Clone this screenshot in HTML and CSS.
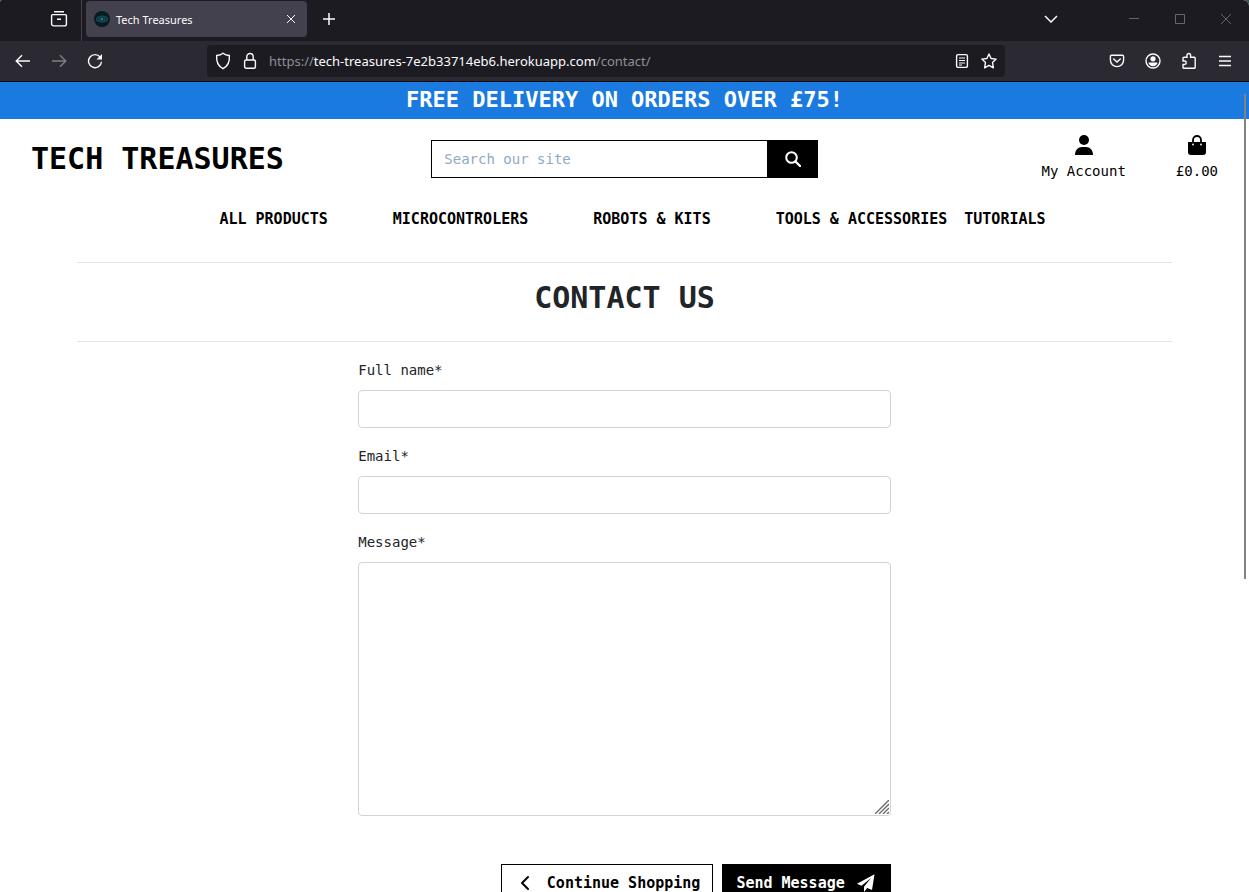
FILE: index.html
```html
<!DOCTYPE html>
<html lang="en">
<head>
<meta charset="utf-8">
<title>Tech Treasures</title>
<link rel="stylesheet" href="styles.css">
</head>
<body>
<div class="window">
  <div class="tabbar">
    <button class="view-btn" aria-label="Recent browsing"><svg width="18" height="18" viewBox="0 0 18 18"><path d="M4 1.700h10M2.600 4.600h12.800a1 1 0 0 1 1 1v8.300a2 2 0 0 1-2 2H3.600a2 2 0 0 1-2-2V5.600a1 1 0 0 1 1-1zM7 9.200h4"/></svg></button>
    <div class="tab">
      <svg class="favicon" width="16" height="16" viewBox="0 0 16 16"><circle cx="8" cy="8" r="8" fill="#071b22"/><ellipse cx="8" cy="8" rx="5.500" ry="2.800" fill="#0d3844" stroke="#124650"/><circle cx="8" cy="8" r="2.500" fill="#0b2d39" stroke="#124650"/><circle cx="8" cy="8" r="1" fill="#5b8a95"/></svg>
      <span class="tab-title">Tech Treasures</span>
      <button class="tab-close" aria-label="Close tab"><svg width="10" height="10" viewBox="0 0 10 10"><path d="M1 1l8 8M9 1L1 9"/></svg></button>
    </div>
    <button class="new-tab" aria-label="New tab"><svg width="12" height="12" viewBox="0 0 12 12"><path d="M6 0v12M0 6h12" stroke-width="1.500"/></svg></button>
    <button class="tab-list" aria-label="List all tabs"><svg width="14" height="8" viewBox="0 0 14 8"><path d="M1 1l6 6 6-6" stroke-width="1.500"/></svg></button>
    <div class="controls">
      <button aria-label="Minimize"><svg width="10" height="10" viewBox="0 0 10 10"><path d="M0 4.500h10"/></svg></button>
      <button aria-label="Maximize"><svg width="10" height="10" viewBox="0 0 10 10"><path d="M.5.5h9v9h-9z"/></svg></button>
      <button aria-label="Close"><svg width="10" height="10" viewBox="0 0 10 10"><path d="M0 0l10 10M10 0L0 10"/></svg></button>
    </div>
  </div>
  <div class="toolbar">
    <button aria-label="Back"><svg width="16" height="14" viewBox="0 0 16 14"><path d="M15 7H1.500M7 1.200L1.200 7 7 12.800"/></svg></button>
    <button class="dim" aria-label="Forward"><svg width="16" height="14" viewBox="0 0 16 14"><path d="M1 7h13.500M9 1.200L14.800 7 9 12.800"/></svg></button>
    <button aria-label="Reload"><svg width="16" height="16" viewBox="0 0 16 16"><path d="M13.200 4.200A6.500 6.500 0 1 0 14.500 8.800"/><path d="M15 1v5.500H9.500z" fill="#fbfbfe" stroke="none"/></svg></button>
    <div class="urlbar">
      <svg width="16" height="18" viewBox="0 0 16 18"><path d="M8 1.200c2 1.500 4.300 2.100 6.300 2.300.5 5.200-1 10.400-6.300 13.200C2.700 13.900 1.200 8.700 1.700 3.500 3.700 3.300 6 2.700 8 1.200z"/></svg>
      <svg width="14" height="18" viewBox="0 0 14 18"><rect x="1.600" y="8" width="10.800" height="8.300" rx="1.500"/><path d="M3.800 8V4.700a3.200 3.200 0 0 1 6.400 0V8"/></svg>
      <span class="url">https://<b>tech-treasures-7e2b33714eb6.herokuapp.com</b>/contact/</span>
      <svg width="14" height="16" viewBox="0 0 14 16"><rect x="1.600" y="1.600" width="10.800" height="12.800" rx="1.500"/><path d="M4 5h6M4 7.500h6M4 10h6M4 12h3" stroke-width="1"/></svg>
      <svg width="16" height="16" viewBox="0 0 16 16"><path d="M8 1l2.100 4.500 5 .6-3.600 3.500.9 5.200L8 12.300l-4.400 2.500.9-5.200L.9 6.100l5-.6z" stroke-linejoin="round"/></svg>
    </div>
    <button aria-label="Save to Pocket"><svg width="16" height="16" viewBox="0 0 16 16"><path d="M2.600 2.200h10.800a1.200 1.200 0 0 1 1.200 1.200V7a6.600 6.600 0 0 1-13.200 0V3.400a1.200 1.200 0 0 1 1.200-1.200zM4.700 6L8 9l3.300-3" stroke-linecap="round"/></svg></button>
    <button aria-label="Account"><svg width="16" height="16" viewBox="0 0 16 16"><circle cx="8" cy="8" r="7"/><circle cx="8" cy="5.800" r="2.600" fill="#fbfbfe" stroke="none"/><path d="M3.500 9.500h9c0 2-2 3.700-4.500 3.700s-4.500-1.700-4.500-3.700z" fill="#fbfbfe" stroke="none"/></svg></button>
    <button aria-label="Extensions"><svg width="16" height="18" viewBox="0 0 16 18"><path d="M2 6.200a1 1 0 0 1 1-1h3V3.300a1.800 1.800 0 0 1 3.600 0v1.900h3.600a1 1 0 0 1 1 1v9a1 1 0 0 1-1 1H3a1 1 0 0 1-1-1v-2.700h1.500a1.700 1.700 0 0 0 0-3.500H2z"/></svg></button>
    <button aria-label="Menu"><svg width="12" height="12" viewBox="0 0 12 12"><path d="M0 1.500h12M0 6h12M0 10.500h12"/></svg></button>
  </div>

  <div class="page">
    <div class="banner">FREE DELIVERY ON ORDERS OVER £75!</div>
    <header class="header">
      <a class="brand" href="#">TECH TREASURES</a>
      <form class="search">
        <input type="text" placeholder="Search our site" aria-label="Search our site">
        <button type="button" aria-label="Search"><svg width="16" height="16" viewBox="0 0 16 16"><circle cx="6.500" cy="6.500" r="5.300" fill="none" stroke="#fff" stroke-width="2"/><path d="M10.500 10.500L15 15" stroke="#fff" stroke-width="2.400" stroke-linecap="round"/></svg></button>
      </form>
      <div class="links">
        <a href="#"><svg width="18" height="20" viewBox="0 0 18 20"><circle cx="9" cy="5" r="5"/><path d="M0 20c0-5 3-8 7-8h4c4 0 7 3 7 8z"/></svg>My Account</a>
        <a href="#"><svg width="18" height="20" viewBox="0 0 18 20"><path d="M5 8V5a4 4 0 0 1 8 0v3" fill="none" stroke="#000" stroke-width="1.800"/><path d="M0 7h18v10a3 3 0 0 1-3 3H3a3 3 0 0 1-3-3z"/><circle cx="5" cy="9.500" r=".9" fill="#fff"/><circle cx="13" cy="9.500" r=".9" fill="#fff"/></svg>£0.00</a>
      </div>
    </header>
    <nav class="nav">
      <a href="#">ALL PRODUCTS</a>
      <a href="#">MICROCONTROLERS</a>
      <a href="#">ROBOTS &amp; KITS</a>
      <a class="tools" href="#">TOOLS &amp; ACCESSORIES</a>
      <a href="#">TUTORIALS</a>
    </nav>
    <main class="main">
      <h1>CONTACT US</h1>
      <form class="contact">
        <label for="name">Full name*</label>
        <input id="name" type="text">
        <label for="email">Email*</label>
        <input id="email" type="email">
        <label for="message">Message*</label>
        <div class="area">
          <textarea id="message"></textarea>
          <svg class="grip" width="14" height="14" viewBox="0 0 14 14"><path d="M0 14L14 0M4 14L14 4M8 14l6-6M12 14l2-2"/></svg>
        </div>
        <div class="actions">
          <a class="btn" href="#"><svg width="10" height="16" viewBox="0 0 10 16"><path d="M8 2L2 8l6 6" fill="none" stroke="#000" stroke-width="2" stroke-linecap="round" stroke-linejoin="round"/></svg>Continue Shopping</a>
          <button class="btn dark" type="button">Send Message<svg width="18" height="18" viewBox="0 0 18 18"><path d="M17.500.3L15 16l-4.800-2L7 18v-5.300L14 4 4.500 11.700 0 9.700z" fill="#fff"/></svg></button>
        </div>
      </form>
    </main>
    <div class="scrollbar"></div>
  </div>
</div>
</body>
</html>
```

FILE: styles.css
```css
* { box-sizing: border-box; }
body { margin: 0; background: #285c55; }
button, input, textarea { font: inherit; margin: 0; }
a { color: inherit; text-decoration: none; }

.window {
  height: 100vh;
  display: flex;
  flex-direction: column;
  overflow: hidden;
  border-radius: 2px 6px 0 0;
  background: #fff;
}

/* Browser chrome */
.tabbar, .toolbar {
  display: flex;
  align-items: center;
  flex: none;
  font-family: "Noto Sans", "Open Sans", sans-serif;
  color: #fbfbfe;
}
.tabbar button, .toolbar button {
  display: flex;
  align-items: center;
  justify-content: center;
  padding: 0;
  border: 0;
  background: none;
}
.tabbar svg, .toolbar svg { flex: none; fill: none; stroke: #fbfbfe; stroke-width: 1.4; }
.tabbar { height: 41px; background: #1c1b22; padding-bottom: 3px; }
.tabbar .view-btn {
  width: 82px;
  height: 41px;
  padding: 0 1px 3px 37px;
  margin-bottom: -3px;
  border-right: 1px solid #42414d;
}
.tabbar .favicon { stroke: none; }
.tab {
  display: flex;
  align-items: center;
  width: 221px;
  height: 36px;
  margin-left: 4px;
  padding: 0 5px 0 8px;
  border-radius: 4px;
  background: #42414d;
}
.tab-title { flex: 1; padding-left: 6px; font-size: 11px; }
.tab-close { width: 22px; height: 22px; }
.tab-close svg { stroke-width: 1; }
.new-tab { width: 36px; height: 36px; margin-left: 4px; }
.tab-list { width: 36px; height: 36px; margin-left: auto; margin-right: 42px; }
.controls { display: flex; }
.controls button { width: 46px; height: 36px; }
.controls svg { stroke: #66656c; stroke-width: 1; }

.toolbar {
  height: 41px;
  padding: 0 6px 0 5px;
  background: #2b2a33;
  border-bottom: 1px solid #0c0c0d;
}
.toolbar button { width: 36px; height: 36px; }
.toolbar .dim { opacity: .4; }
.urlbar {
  flex: 1;
  display: flex;
  align-items: center;
  gap: 12px;
  height: 32px;
  margin: 0 94px;
  padding: 0 8px;
  border-radius: 4px;
  background: #1c1b22;
}
.url { flex: 1; font-size: 13px; white-space: nowrap; color: #8f8f96; }
.url b { font-weight: 400; color: #fbfbfe; }

/* Shop page */
.page {
  flex: 1;
  min-height: 0;
  position: relative;
  overflow: hidden;
  font-family: "DejaVu Sans Mono", monospace;
  font-size: 14px;
  line-height: 24px;
  color: #212529;
}
.banner {
  height: 37px;
  background: #1a7adf;
  color: #fff;
  text-align: center;
  font-size: 22px;
  font-weight: 700;
  line-height: 36px;
}
.header {
  display: grid;
  grid-template-columns: repeat(3, 1fr);
  align-items: center;
  height: 80px;
  color: #000;
}
.brand { padding-left: 31px; font-size: 30px; font-weight: 700; }
.search { display: flex; margin: 0 15px; }
.search input {
  flex: 1;
  min-width: 0;
  height: 38px;
  padding: 0 12px;
  border: 1px solid #000;
  border-radius: 0;
}
.search input::placeholder { color: #8fa9c6; }
.search button {
  display: flex;
  align-items: center;
  justify-content: center;
  width: 50px;
  padding: 0;
  border: 0;
  background: #000;
}
.links { display: flex; justify-content: flex-end; gap: 50px; padding: 0 31px; }
.links a { display: flex; flex-direction: column; align-items: center; gap: 4px; }

.nav {
  display: flex;
  justify-content: center;
  gap: 65px;
  padding: 8px 0 0 16px;
  font-size: 15px;
  font-weight: 700;
  color: #000;
}
.nav .tools { margin-right: -48px; }

.main { margin: 31px 77px 0; }
h1 {
  margin: 0;
  padding: 16px 0 24px;
  border: solid #e3e4e5;
  border-width: 1px 0;
  text-align: center;
  font-size: 30px;
  line-height: 38px;
}
.contact { padding: 16px 0; margin: 0 auto; width: calc(50% - 15px); }
.contact label { display: block; margin-bottom: 8px; }
.contact input, .contact textarea {
  display: block;
  width: 100%;
  height: 38px;
  padding: 6px 12px;
  border: 1px solid #ced4da;
  border-radius: 4px;
}
.contact input { margin-bottom: 16px; }
.area { position: relative; }
.contact textarea { height: 254px; resize: none; }
.grip { position: absolute; right: 2px; bottom: 2px; fill: none; stroke: #666; stroke-width: 1.3; }
.actions { display: flex; justify-content: flex-end; gap: 9px; margin-top: 48px; }
.btn {
  display: flex;
  align-items: center;
  gap: 17px;
  padding: 6px 12px 6px 18px;
  border: 1px solid #000;
  font-size: 15px;
  font-weight: 700;
  color: #000;
  background: #fff;
}
.btn.dark { gap: 12px; padding: 6px 15px 6px 13px; background: #000; color: #fff; }
.scrollbar {
  position: absolute;
  top: 12px;
  right: 3px;
  width: 2px;
  height: 485px;
  background: #808285;
}
```
